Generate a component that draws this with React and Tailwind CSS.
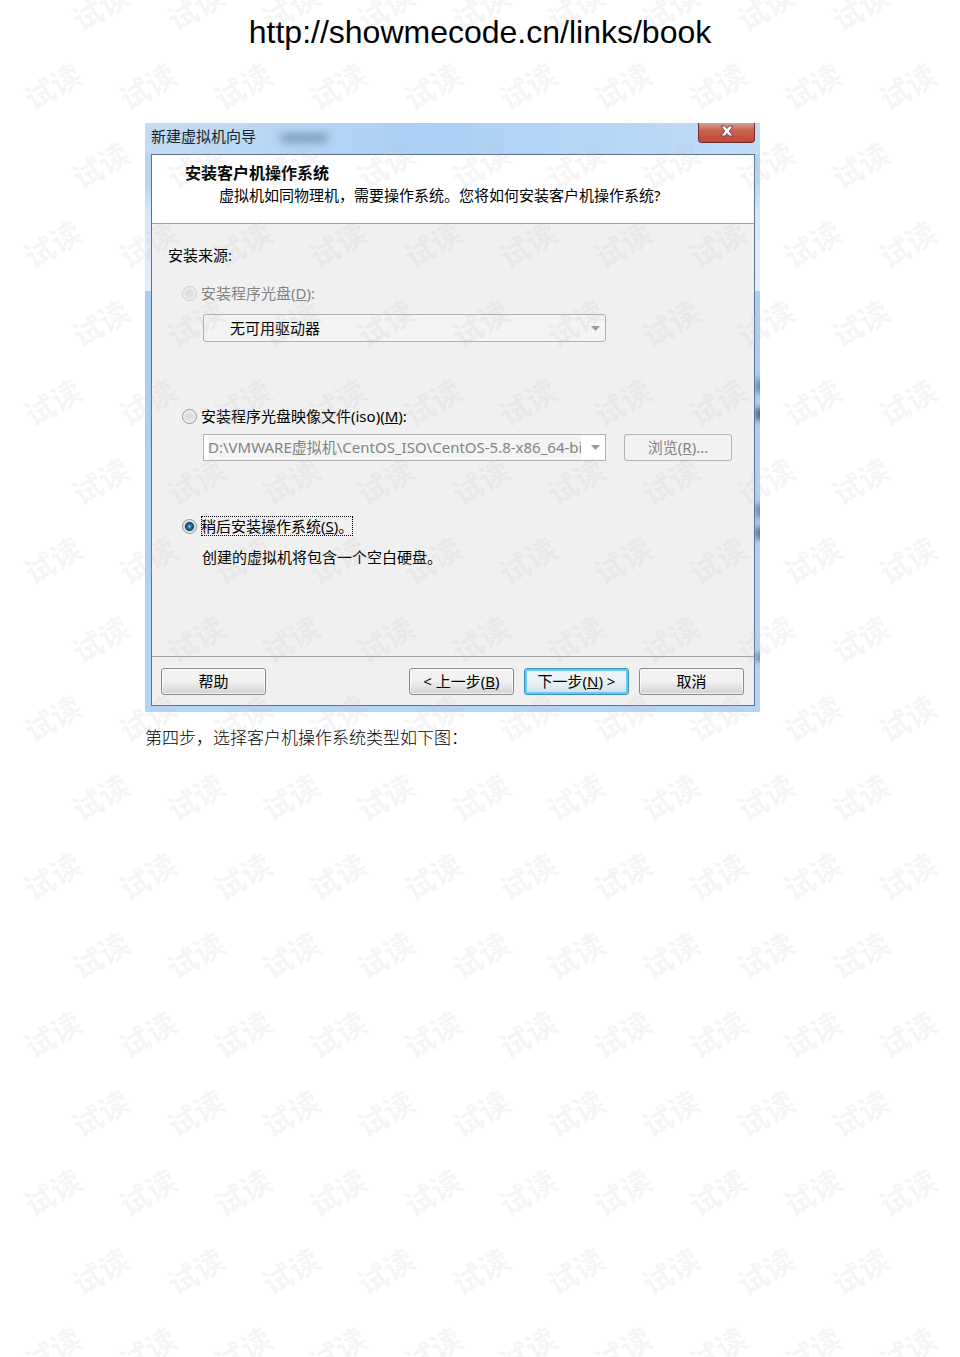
import clsx from 'clsx'

const ROWS = Array.from({ length: 18 }, (_, i) => i)

function Watermark() {
  return (
    <div
      aria-hidden="true"
      className="absolute inset-x-0 -top-8 bottom-0 overflow-hidden pointer-events-none select-none"
    >
      {ROWS.map((row) => (
        <div key={row} className={clsx('flex h-[79px]', row % 2 ? 'ml-[5px]' : 'ml-[53px]')}>
          {Array.from({ length: row % 2 ? 10 : 9 }, (_, i) => (
            <div key={i} className="w-[95px] shrink-0 flex items-center justify-center">
              <span className="-rotate-[30deg] text-[30px] leading-none font-bold text-[#c0c0c0]/18">试读</span>
            </div>
          ))}
        </div>
      ))}
    </div>
  )
}

function DialogButton({ children, primary, disabled, className }) {
  return (
    <button
      type="button"
      disabled={disabled}
      className={clsx(
        'h-[27px] rounded-[3px] border text-[15px] leading-none flex items-center justify-center whitespace-nowrap',
        disabled && 'border-[#b4b4b4] bg-[#f2f2f2] text-[#838383]',
        primary &&
          'border-[#3c8cb4] bg-linear-to-b from-[#eef3f6] from-45% to-[#cfe0e8] ring-2 ring-inset ring-[#62cdf0] text-black',
        !disabled &&
          !primary &&
          'border-[#8a8a8a] bg-linear-to-b from-[#f2f2f2] from-45% to-[#d2d2d2] ring-1 ring-inset ring-white/70 text-black',
        className
      )}
    >
      <span>{children}</span>
    </button>
  )
}

function Radio({ id, label, checked, disabled, focused }) {
  return (
    <div className="flex items-center h-5">
      <input
        id={id}
        type="radio"
        name="source"
        defaultChecked={checked}
        disabled={disabled}
        className={clsx(
          'appearance-none size-[15px] shrink-0 rounded-full border mr-1',
          checked
            ? 'border-[#8b959b] bg-[radial-gradient(circle_at_50%_50%,#8fd4ee_0,#2b7aa5_20%,#173f5f_44%,#dfe9ee_56%)]'
            : 'bg-[radial-gradient(circle,#dcdcdc_0,#e2e2e2_45%,#f4f4f4_70%)]',
          !checked && (disabled ? 'border-[#cacaca]' : 'border-[#969696]')
        )}
      />
      <label
        htmlFor={id}
        className={clsx(
          'h-5 leading-5 whitespace-nowrap',
          disabled && 'text-[#838383]',
          focused && 'outline-1 outline-dotted outline-black -outline-offset-1'
        )}
      >
        {label}
      </label>
    </div>
  )
}

function Arrow() {
  return (
    <svg viewBox="0 0 9 5" className="w-[9px] h-[5px]" fill="#9a9a9a">
      <path d="M0 0h9L4.5 5z" />
    </svg>
  )
}

// what shows through the glass frame on the right
function GlassSmudges() {
  return (
    <div aria-hidden="true" className="absolute right-0 top-0 bottom-0 w-[5px] overflow-hidden">
      <span className="absolute -right-1 top-[256px] w-2 h-[14px] bg-[#4f7fae] blur-[3px]" />
      <span className="absolute -right-1 top-[285px] w-2 h-3 bg-[#2f4f70] blur-[3px]" />
      <span className="absolute -right-1 top-[381px] w-2 h-[14px] bg-[#4f7fae] blur-[3px]" />
      <span className="absolute -right-1 top-[404px] w-2 h-3 bg-[#3d5f84] blur-[3px]" />
      <span className="absolute -right-1 top-[530px] w-2 h-2 bg-[#4a7199] blur-[3px]" />
    </div>
  )
}

function TitleBar() {
  return (
    <div className="h-[31px] -ml-[6px] -mr-[5px] pl-[6px] pr-[5px] flex items-start justify-between bg-linear-to-r from-[#c3dcf3] via-[#abd0f6] via-45% to-[#c0dcf6]">
      <div className="flex items-center h-[26px]">
        <h1 className="text-[15px] leading-none text-[#1b2430]">新建虚拟机向导</h1>
        <span className="ml-6 mt-1 w-12 h-2 rounded-full bg-[#4d6b8c]/60 blur-[4px]" />
      </div>
      <button
        type="button"
        aria-label="关闭"
        className="w-[57px] h-5 rounded-b-[4px] border border-t-0 border-[#6d2a2c] bg-linear-to-b from-[#d9a095] via-[#c9604f] via-40% to-[#c5473a] flex items-start justify-center pt-[2px]"
      >
        <svg viewBox="0 0 14 12" className="w-[14px] h-3">
          <path d="M1 1h4l2 2.500 2-2.500h4L9.300 6 13 11H9L7 8.500 5 11H1L4.700 6z" fill="#fff" stroke="#6b4a55" />
        </svg>
      </button>
    </div>
  )
}

function Dialog() {
  return (
    <section className="relative bg-[linear-gradient(to_bottom,#b5d4f1_0,#b8d6f2_60px,#d8e8f8_90px,#e2effc_168px,#a9cef3_168px,#b2d5fa_100%)] pl-[6px] pr-[5px] pb-[6px]">
      <GlassSmudges />
      <TitleBar />
      <div className="relative border border-[#5d7490] bg-[#f0f0f0]">
        <header className="h-[69px] bg-white border-b border-[#a0a0a0] pl-[33px] pt-2">
          <h2 className="text-[16px] leading-5 font-bold">安装客户机操作系统</h2>
          <p className="pl-[34px] leading-6 whitespace-nowrap">
            虚拟机如同物理机，需要操作系统。您将如何安装客户机操作系统?
          </p>
        </header>

        <form className="h-[432px] pl-4 pt-[21px]">
          <p className="leading-5">安装来源:</p>
          <div className="pl-[14px] pt-[18px]">
            <Radio id="disc" disabled label={<>安装程序光盘(<u>D</u>):</>} />
            <div className="mt-[11px] ml-[21px] w-[403px] relative">
              <select
                disabled
                aria-label="安装程序光盘"
                className="appearance-none block w-full h-7 rounded-[3px] border border-[#b0b0b0] bg-[#f4f4f4] pl-[26px] text-[15px] text-black opacity-100"
              >
                <option>无可用驱动器</option>
              </select>
              <span className="absolute right-[6px] top-3">
                <Arrow />
              </span>
            </div>

            <div className="mt-16">
              <Radio id="iso" label={<>安装程序光盘映像文件(iso)(<u>M</u>):</>} />
            </div>
            <div className="mt-2 ml-[21px] flex items-center gap-[18px]">
              <div className="w-[403px] h-[27px] flex border border-[#b0b0b0] bg-white">
                <input
                  type="text"
                  disabled
                  aria-label="映像文件"
                  defaultValue="D:\VMWARE虚拟机\CentOS_ISO\CentOS-5.8-x86_64-bin"
                  className="flex-1 min-w-0 ml-1 bg-[#f4f4f4] text-[15px] text-[#838383]"
                />
                <button type="button" disabled aria-label="展开" className="w-6 pl-1 flex items-center justify-center">
                  <Arrow />
                </button>
              </div>
              <DialogButton disabled className="w-[108px]">
                浏览(<u>R</u>)...
              </DialogButton>
            </div>

            <div className="mt-[55px]">
              <Radio id="later" checked focused label={<>稍后安装操作系统(<u>S</u>)。</>} />
              <p className="mt-[11px] ml-5 leading-5">创建的虚拟机将包含一个空白硬盘。</p>
            </div>
          </div>
        </form>

        <footer className="h-[49px] border-t border-[#a0a0a0] flex items-center gap-[10px] pt-px pl-[9px] pr-[10px]">
          <DialogButton className="w-[105px] mr-auto">帮助</DialogButton>
          <DialogButton className="w-[105px]">
            &lt; 上一步(<u>B</u>)
          </DialogButton>
          <DialogButton primary className="w-[105px]">
            下一步(<u>N</u>) &gt;
          </DialogButton>
          <DialogButton className="w-[105px]">取消</DialogButton>
        </footer>
      </div>
    </section>
  )
}

export default function App() {
  return (
    <div className="relative min-h-screen overflow-hidden bg-white text-black text-[15px] font-['Noto_Sans','Noto_Sans_CJK_SC',sans-serif]">
      <p className="pt-3 text-center text-[32px] leading-10 font-['Liberation_Sans',sans-serif]">
        http://showmecode.cn/links/book
      </p>
      <main className="mt-[71px] ml-[145px] max-w-[615px]">
        <Dialog />
        <p className="mt-3 text-[17px] leading-7 font-light">第四步，选择客户机操作系统类型如下图：</p>
      </main>
      <Watermark />
    </div>
  )
}
